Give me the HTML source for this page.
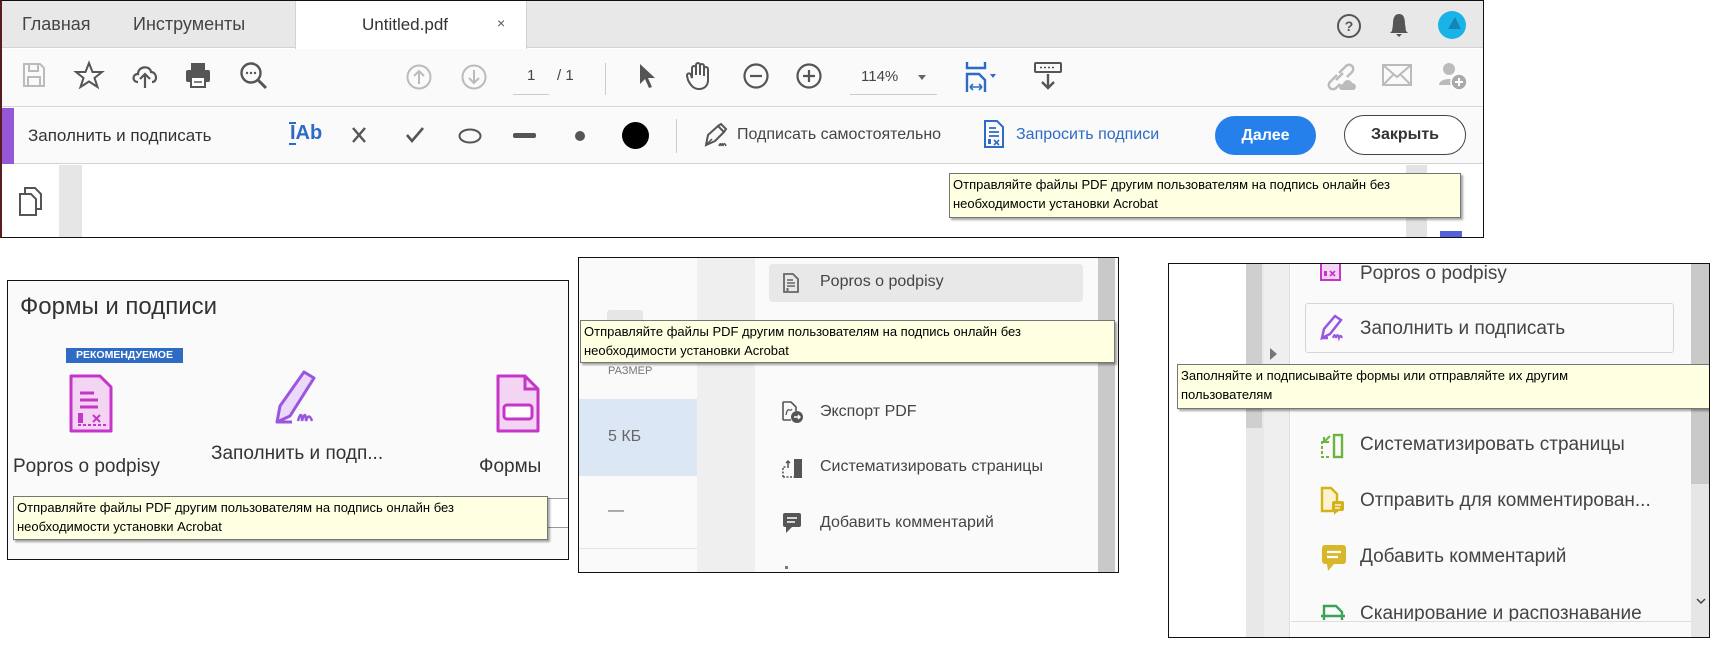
<!DOCTYPE html>
<html><head><meta charset="utf-8">
<style>
*{margin:0;padding:0;box-sizing:border-box}
body{width:1716px;height:657px;background:#fff;position:relative;overflow:hidden;font-family:"Liberation Sans","DejaVu Sans",sans-serif;color:#333}
.a{position:absolute}
.t{position:absolute;white-space:nowrap}
.tip{position:absolute;background:#ffffe1;border:1px solid #767676;box-shadow:2px 2px 2px rgba(0,0,0,.35);font-size:13px;line-height:19px;padding:1px 3px;color:#000}
svg{position:absolute;overflow:visible}
</style></head><body>

<!-- ===== TOP WINDOW ===== -->
<div class="a" style="left:0;top:0;width:1484px;height:238px;border:1px solid #111;border-left:2px solid #5a1d1d;background:#fff;overflow:hidden">
  <div class="a" style="left:0;top:0;width:1484px;height:47px;background:#e8e8e8;border-bottom:1px solid #d3d3d3"></div>
  <div class="a" style="left:293px;top:0;width:232px;height:48px;background:#fff;border-left:1px solid #d3d3d3;border-right:1px solid #d3d3d3"></div>
  <div class="t" style="left:20px;top:13px;font-size:18px;color:#444">Главная</div>
  <div class="t" style="left:131px;top:13px;font-size:18px;color:#444">Инструменты</div>
  <div class="t" style="left:360px;top:14px;font-size:17px;color:#333">Untitled.pdf</div>
  <div class="t" style="left:495px;top:14px;font-size:14px;color:#555">×</div>
  <svg style="left:1334px;top:12px" width="26" height="26"><circle cx="13" cy="13" r="11" fill="none" stroke="#555" stroke-width="2"/><text x="13" y="18" font-size="14" font-weight="bold" text-anchor="middle" fill="#555" font-family="Liberation Sans">?</text></svg>
  <svg style="left:1386px;top:11px" width="22" height="26"><path d="M11 2 C6 2 5 7 5 12 L4 19 L2 21 L20 21 L18 19 L17 12 C17 7 16 2 11 2Z M8 22 L14 22 L11 25Z" fill="#555"/></svg>
  <svg style="left:1436px;top:10px" width="28" height="28"><circle cx="14" cy="14" r="14" fill="#1ab3e8"/><path d="M10 18 L17 6 L23 18Z" fill="#1287b5"/></svg>

  <div class="a" style="left:0;top:48px;width:1484px;height:58px;background:#fafafa;border-bottom:1px solid #d7d7d7"></div>
  <svg style="left:20px;top:61px" width="24" height="26"><path d="M2 2 H18 L22 6 V24 H2Z" fill="none" stroke="#bbb" stroke-width="2"/><rect x="7" y="2" width="9" height="7" fill="none" stroke="#bbb" stroke-width="2"/><rect x="6" y="15" width="12" height="9" fill="none" stroke="#bbb" stroke-width="2"/></svg>
  <svg style="left:72px;top:60px" width="30" height="28"><path d="M15 2 L18.5 11 L28 11 L20.5 17 L23.5 26 L15 20.5 L6.5 26 L9.5 17 L2 11 L11.5 11Z" fill="none" stroke="#555" stroke-width="2"/></svg>
  <svg style="left:128px;top:60px" width="30" height="28"><path d="M8 21 C2 21 2 13 8 13 C8 5 20 4 21 11 C27 11 28 21 22 21" fill="none" stroke="#555" stroke-width="2.2"/><path d="M15 27 V13 M10 18 L15 13 L20 18" fill="none" stroke="#555" stroke-width="2.2"/></svg>
  <svg style="left:182px;top:60px" width="28" height="28"><rect x="7" y="2" width="14" height="7" fill="#555"/><rect x="2" y="9" width="24" height="12" rx="2" fill="#555"/><rect x="7" y="16" width="14" height="10" fill="#fff" stroke="#555" stroke-width="2"/><path d="M10 21 H18" stroke="#555" stroke-width="1.5"/></svg>
  <svg style="left:237px;top:60px" width="30" height="30"><circle cx="12" cy="12" r="9.5" fill="none" stroke="#555" stroke-width="2.4"/><path d="M19 19 L27 27" stroke="#555" stroke-width="3"/><circle cx="8" cy="12" r="1.2" fill="#555"/><circle cx="12" cy="12" r="1.2" fill="#555"/><circle cx="16" cy="12" r="1.2" fill="#555"/></svg>
  <svg style="left:404px;top:63px" width="26" height="26"><circle cx="13" cy="13" r="11.5" fill="none" stroke="#bbb" stroke-width="2"/><path d="M13 20 V7 M8 12 L13 7 L18 12" fill="none" stroke="#bbb" stroke-width="2"/></svg>
  <svg style="left:459px;top:63px" width="26" height="26"><circle cx="13" cy="13" r="11.5" fill="none" stroke="#bbb" stroke-width="2"/><path d="M13 6 V19 M8 14 L13 19 L18 14" fill="none" stroke="#bbb" stroke-width="2"/></svg>
  <div class="t" style="left:525px;top:66px;font-size:15px;color:#444">1</div>
  <div class="a" style="left:511px;top:93px;width:36px;height:1px;background:#ccc"></div>
  <div class="t" style="left:555px;top:66px;font-size:15px;color:#444">/ 1</div>
  <div class="a" style="left:603px;top:62px;width:1px;height:32px;background:#ccc"></div>
  <svg style="left:635px;top:61px" width="20" height="28"><path d="M3 2 L3 22 L8 17 L12 26 L15 25 L11 16 L18 16Z" fill="#555"/></svg>
  <svg style="left:683px;top:60px" width="28" height="30"><path d="M7 17 V7 a2 2 0 0 1 4 0 V14 V4 a2 2 0 0 1 4 0 V14 V5 a2 2 0 0 1 4 0 V15 V8 a2 2 0 0 1 4 0 V19 C23 25 19 28 14 28 C9 28 6 25 3 19 L2 15 a2 2 0 0 1 4 -1Z" fill="none" stroke="#555" stroke-width="2"/></svg>
  <svg style="left:741px;top:62px" width="26" height="26"><circle cx="13" cy="13" r="11.5" fill="none" stroke="#555" stroke-width="2.2"/><path d="M7 13 H19" stroke="#555" stroke-width="2.2"/></svg>
  <svg style="left:794px;top:62px" width="26" height="26"><circle cx="13" cy="13" r="11.5" fill="none" stroke="#555" stroke-width="2.2"/><path d="M7 13 H19 M13 7 V19" stroke="#555" stroke-width="2.2"/></svg>
  <div class="t" style="left:859px;top:67px;font-size:15px;color:#444">114%</div>
  <svg style="left:916px;top:74px" width="8" height="5"><path d="M0 0 H8 L4 5Z" fill="#666"/></svg>
  <div class="a" style="left:848px;top:93px;width:87px;height:1px;background:#ccc"></div>
  <svg style="left:963px;top:60px" width="32" height="32"><path d="M2 1 V7 H20 V1" fill="none" stroke="#2d6bc4" stroke-width="2.4"/><path d="M2 31 V13 H14 L20 19 V31" fill="none" stroke="#2d6bc4" stroke-width="2.4"/><path d="M5 26 H17 M5 26 L8 23 M5 26 L8 29 M17 26 L14 23 M17 26 L14 29" stroke="#2d6bc4" stroke-width="1.6" fill="none"/><path d="M25 13 H31 L28 17Z" fill="#2d6bc4"/></svg>
  <svg style="left:1032px;top:61px" width="28" height="28"><rect x="1" y="1" width="26" height="9" rx="1" fill="none" stroke="#555" stroke-width="2"/><path d="M6 5.5 H22" stroke="#555" stroke-width="1.5" stroke-dasharray="2 2"/><path d="M14 12 V26 M8 20 L14 26 L20 20" fill="none" stroke="#555" stroke-width="2.4"/></svg>
  <svg style="left:1323px;top:60px" width="32" height="30"><path d="M12 14 L5 21 a4 4 0 0 0 6 6 L15 23 M14 12 L21 5 a4 4 0 0 1 6 6 L22 16 M11 19 L18 12" fill="none" stroke="#bbb" stroke-width="2.4"/><path d="M17 29 C13 29 13 23 18 23 C19 18 26 18 27 22 C32 22 32 29 28 29Z" fill="#bbb"/></svg>
  <svg style="left:1380px;top:63px" width="30" height="22"><rect x="1" y="1" width="28" height="20" fill="none" stroke="#bbb" stroke-width="2"/><path d="M1 1 L15 13 L29 1 M1 21 L11 11 M29 21 L19 11" fill="none" stroke="#bbb" stroke-width="2"/></svg>
  <svg style="left:1436px;top:60px" width="32" height="30"><circle cx="11" cy="8" r="6" fill="#bbb"/><path d="M1 24 C1 16 21 16 21 24Z" fill="#bbb"/><circle cx="21" cy="21" r="8" fill="#aaa" stroke="#fff" stroke-width="1.5"/><path d="M17 21 H25 M21 17 V25" stroke="#fff" stroke-width="2"/></svg>

  <div class="a" style="left:0;top:107px;width:1484px;height:56px;background:#fafafa;border-bottom:1px solid #d3d3d3"></div>
  <div class="a" style="left:0;top:107px;width:12px;height:56px;background:#9656d6"></div>
  <div class="t" style="left:26px;top:125px;font-size:17px;color:#333">Заполнить и подписать</div>
  <div class="t" style="left:288px;top:121px;font-size:20px;color:#2d6bc4;font-weight:bold">IAb</div>
  <div class="a" style="left:287px;top:121px;width:7px;height:2px;background:#2d6bc4"></div>
  <div class="a" style="left:287px;top:142px;width:7px;height:2px;background:#2d6bc4"></div>
  <svg style="left:349px;top:126px" width="16" height="16"><path d="M2 1 L14 15 M14 1 L2 15" stroke="#555" stroke-width="2.4"/></svg>
  <svg style="left:403px;top:126px" width="20" height="16"><path d="M2 8 L7 14 L18 1" fill="none" stroke="#555" stroke-width="2.6"/></svg>
  <svg style="left:456px;top:127px" width="24" height="16"><ellipse cx="12" cy="8" rx="10.5" ry="6.5" fill="none" stroke="#555" stroke-width="2"/></svg>
  <div class="a" style="left:511px;top:132px;width:23px;height:5px;border-radius:2px;background:#555"></div>
  <div class="a" style="left:573px;top:130px;width:10px;height:10px;border-radius:50%;background:#555"></div>
  <div class="a" style="left:620px;top:121px;width:27px;height:27px;border-radius:50%;background:#000"></div>
  <div class="a" style="left:674px;top:118px;width:1px;height:34px;background:#ccc"></div>
  <svg style="left:700px;top:122px" width="28" height="26"><path d="M4 22 L6 12 L16 3 L22 9 L13 18Z" fill="none" stroke="#555" stroke-width="2"/><path d="M16 3 L19 1 L24 6 L22 9" fill="none" stroke="#555" stroke-width="2"/><path d="M4 22 L10 16" stroke="#555" stroke-width="1.5"/><path d="M17 23 c1 -3 2 -3 2 0 c1 -3 2 -3 2 0 c1 -3 2 -3 3 0" fill="none" stroke="#555" stroke-width="1.5"/></svg>
  <div class="t" style="left:735px;top:125px;font-size:16px;color:#444">Подписать самостоятельно</div>
  <svg style="left:982px;top:119px" width="20" height="28"><path d="M1 1 H13 L19 7 V27 H1Z" fill="none" stroke="#2d6bc4" stroke-width="2"/><path d="M5 8 H12 M5 12 H15 M5 16 H15" stroke="#2d6bc4" stroke-width="1.8"/><rect x="4" y="19" width="3" height="5" fill="#2d6bc4"/><path d="M10 20 L15 25 M15 20 L10 25" stroke="#2d6bc4" stroke-width="1.6"/></svg>
  <div class="t" style="left:1014px;top:125px;font-size:16px;color:#2d6bc4">Запросить подписи</div>
  <div class="a" style="left:1213px;top:115px;width:101px;height:39px;border-radius:20px;background:#2680eb;color:#fff;font-weight:bold;font-size:16px;text-align:center;line-height:39px">Далее</div>
  <div class="a" style="left:1342px;top:114px;width:122px;height:40px;border-radius:20px;border:1.5px solid #444;background:#fff;color:#333;font-weight:bold;font-size:16px;text-align:center;line-height:37px">Закрыть</div>

  <div class="a" style="left:57px;top:164px;width:23px;height:74px;background:#e6e6e6"></div>
  <svg style="left:16px;top:186px" width="26" height="30"><path d="M7 6 V1 H17 L23 7 V22 H19" fill="none" stroke="#555" stroke-width="2"/><path d="M2 7 H13 L18 12 V28 H2Z" fill="none" stroke="#555" stroke-width="2"/></svg>
  <div class="a" style="left:1404px;top:164px;width:21px;height:74px;background:#e3e3e3"></div>
  <div class="a" style="left:1438px;top:230px;width:22px;height:8px;background:#5660d8"></div>
  <div class="tip" style="left:947px;top:172px;width:512px;height:45px">Отправляйте файлы PDF другим пользователям на подпись онлайн без<br>необходимости установки Acrobat</div>
</div>

<!-- ===== PANEL 1 ===== -->
<div class="a" style="left:7px;top:280px;width:562px;height:280px;border:1px solid #111;background:#fafafa;overflow:hidden">
  <div class="t" style="left:12px;top:12px;font-size:24px;color:#333">Формы и подписи</div>
  <div class="a" style="left:58px;top:67px;width:117px;height:15px;background:#2d6bc4;color:#fff;font-size:10.5px;font-weight:bold;line-height:15px;text-align:center">РЕКОМЕНДУЕМОЕ</div>
  <svg style="left:60px;top:92px" width="46" height="62"><path d="M3 3 H32 L43 14 V58 H3Z" fill="#f3d4f3" stroke="#c535c8" stroke-width="3" stroke-linejoin="round"/><path d="M12 20 H26 M12 27 H30 M12 34 H30" stroke="#c535c8" stroke-width="3"/><rect x="10" y="40" width="5" height="10" fill="#c535c8"/><path d="M10 52 H38" stroke="#c535c8" stroke-width="2" stroke-dasharray="3 2"/><path d="M25 42 L32 49 M32 42 L25 49" stroke="#c535c8" stroke-width="2"/></svg>
  <svg style="left:266px;top:87px" width="50" height="58"><path d="M3 54 L6 38 L30 4 L40 10 L16 48Z" fill="#ead9f8" stroke="#9a56e0" stroke-width="3" stroke-linejoin="round"/><path d="M3 54 H18" stroke="#9a56e0" stroke-width="3"/><path d="M24 53 c2 -8 4 -8 4 0 c2 -8 4 -8 4 0 c2 -6 4 -6 6 0" fill="none" stroke="#9a56e0" stroke-width="2.5"/></svg>
  <svg style="left:487px;top:92px" width="46" height="62"><path d="M3 3 H30 L43 16 V58 H3Z" fill="#f3d4f3" stroke="#c535c8" stroke-width="3" stroke-linejoin="round"/><path d="M30 3 V16 H43" fill="none" stroke="#c535c8" stroke-width="3"/><rect x="9" y="32" width="28" height="14" rx="3" fill="#fff" stroke="#c535c8" stroke-width="3"/></svg>
  <div class="t" style="left:5px;top:175px;font-size:19px;color:#333">Popros o podpisy</div>
  <div class="t" style="left:203px;top:162px;font-size:19px;color:#333">Заполнить и подп...</div>
  <div class="t" style="left:471px;top:175px;font-size:19px;color:#333">Формы</div>
  <div class="a" style="left:530px;top:217px;width:32px;height:30px;border:1px solid #999;border-left:none;background:#fff"></div>
  <div class="tip" style="left:5px;top:215px;width:535px;height:44px">Отправляйте файлы PDF другим пользователям на подпись онлайн без<br>необходимости установки Acrobat</div>
</div>

<!-- ===== PANEL 2 ===== -->
<div class="a" style="left:578px;top:257px;width:541px;height:316px;border:1px solid #111;background:#fafafa;overflow:hidden">
  <div class="a" style="left:0;top:0;width:118px;height:316px;background:#fafafa"></div>
  <div class="a" style="left:28px;top:52px;width:36px;height:20px;background:#e6e6e6;border-radius:3px"></div>
  <div class="t" style="left:29px;top:107px;font-size:11px;color:#777">РАЗМЕР</div>
  <div class="a" style="left:0;top:141px;width:118px;height:77px;background:#dce7f5"></div>
  <div class="t" style="left:29px;top:170px;font-size:16px;color:#666">5 КБ</div>
  <div class="a" style="left:0;top:290px;width:118px;height:1px;background:#e3e3e3"></div>
  <div class="t" style="left:29px;top:244px;font-size:16px;color:#666">—</div>
  <div class="a" style="left:118px;top:0;width:58px;height:316px;background:#efefef"></div>
  <div class="a" style="left:519px;top:0;width:17px;height:316px;background:#c9c9c9"></div>
  <div class="a" style="left:190px;top:6px;width:314px;height:38px;background:#e8e8e8;border-radius:4px"></div>
  <svg style="left:204px;top:15px" width="16" height="20"><path d="M1 1 H10 L15 6 V19 H1Z" fill="none" stroke="#666" stroke-width="1.8"/><path d="M4 7 H10 M4 10 H12 M4 13 H12" stroke="#666" stroke-width="1.4"/><rect x="3.5" y="15" width="2" height="3" fill="#666"/></svg>
  <div class="t" style="left:241px;top:15px;font-size:16px;color:#444">Popros o podpisy</div>
  <svg style="left:203px;top:143px" width="22" height="24"><path d="M1 1 H9 L14 6 V10 M9 19 H1Z M1 1 V19" fill="none" stroke="#555" stroke-width="1.6"/><path d="M4 14 c2 -10 4 -2 6 -6" fill="none" stroke="#555" stroke-width="1.3"/><circle cx="15" cy="16" r="6" fill="#555"/><path d="M12 16 H18 M16 14 L18 16 L16 18" stroke="#fff" stroke-width="1.4" fill="none"/></svg>
  <div class="t" style="left:241px;top:145px;font-size:16px;color:#444">Экспорт PDF</div>
  <svg style="left:203px;top:199px" width="22" height="22"><path d="M1 20 V10 H8 M1 20 H12" fill="none" stroke="#555" stroke-width="1.5" stroke-dasharray="2 1.5"/><rect x="12" y="2" width="8" height="19" fill="#555"/><path d="M6 4 V9 M4 6 L6 4 L8 6" stroke="#555" stroke-width="1.5" fill="none"/></svg>
  <div class="t" style="left:241px;top:200px;font-size:16px;color:#444">Систематизировать страницы</div>
  <svg style="left:203px;top:254px" width="20" height="22"><rect x="1" y="1" width="18" height="14" rx="2" fill="#555"/><path d="M4 15 L4 21 L10 15Z" fill="#555"/><path d="M5 6 H15 M5 10 H13" stroke="#fff" stroke-width="1.6"/></svg>
  <div class="t" style="left:241px;top:256px;font-size:16px;color:#444">Добавить комментарий</div>
  <div class="a" style="left:206px;top:308px;width:3px;height:3px;background:#777"></div>
  <div class="tip" style="left:1px;top:62px;width:535px;height:43px">Отправляйте файлы PDF другим пользователям на подпись онлайн без<br>необходимости установки Acrobat</div>
</div>

<!-- ===== PANEL 3 ===== -->
<div class="a" style="left:1168px;top:263px;width:542px;height:375px;border:1px solid #111;background:#fff;overflow:hidden">
  <div class="a" style="left:77px;top:0;width:18px;height:375px;background:#e8e8e8"></div>
  <div class="a" style="left:77px;top:0;width:16px;height:164px;background:#cfcfcf"></div>
  <div class="a" style="left:95px;top:0;width:26px;height:375px;background:#efefef;border-right:1px solid #ddd"></div>
  <svg style="left:101px;top:84px" width="8" height="12"><path d="M0 0 L7 6 L0 12Z" fill="#777"/></svg>
  <div class="a" style="left:122px;top:0;width:400px;height:375px;background:#fafafa"></div>
  <div class="a" style="left:522px;top:0;width:18px;height:375px;background:#e6e6e6"></div>
  <div class="a" style="left:522px;top:0;width:18px;height:220px;background:#c9c9c9"></div>
  <svg style="left:527px;top:334px" width="10" height="7"><path d="M1 1 L5 5 L9 1" fill="none" stroke="#444" stroke-width="1.5"/></svg>
  <svg style="left:151px;top:-5px" width="22" height="22"><rect x="1" y="1" width="19" height="20" fill="#f3d4f3" stroke="#c535c8" stroke-width="2"/><rect x="4" y="12" width="3" height="5" fill="#c535c8"/><path d="M10 12 L15 17 M15 12 L10 17" stroke="#c535c8" stroke-width="1.6"/></svg>
  <div class="t" style="left:191px;top:-1px;font-size:19px;color:#444">Popros o podpisy</div>
  <div class="a" style="left:136px;top:39px;width:369px;height:50px;border:1px solid #d6d6d6;border-radius:3px;background:#fafafa"></div>
  <svg style="left:151px;top:50px" width="26" height="26"><path d="M2 24 L4 15 L15 2 L21 6 L10 20Z" fill="none" stroke="#9a56e0" stroke-width="2.5"/><path d="M2 24 H8" stroke="#9a56e0" stroke-width="2.5"/><path d="M13 24 c1 -4 2 -4 3 0 c1 -4 2 -4 3 0 c1 -3 2 -3 3 0" fill="none" stroke="#9a56e0" stroke-width="2"/></svg>
  <div class="t" style="left:191px;top:54px;font-size:19px;color:#444">Заполнить и подписать</div>
  <svg style="left:151px;top:169px" width="24" height="26"><path d="M2 8 V24 H11" fill="none" stroke="#6db33f" stroke-width="2" stroke-dasharray="3 2"/><rect x="14" y="2" width="8" height="22" fill="none" stroke="#6db33f" stroke-width="2.4"/><path d="M10 3 L4 9 M4 4 V9 H9" fill="none" stroke="#6db33f" stroke-width="2"/></svg>
  <div class="t" style="left:191px;top:170px;font-size:19px;color:#444">Систематизировать страницы</div>
  <svg style="left:151px;top:223px" width="26" height="30"><path d="M2 1 H11 L17 7 V24 H2Z" fill="#fbf3cf" stroke="#d4b21a" stroke-width="2.4"/><rect x="12" y="14" width="12" height="10" rx="2" fill="#d4b21a"/><path d="M14 24 V28 L18 24" fill="#d4b21a"/><path d="M15 18 H21 M15 21 H20" stroke="#fff" stroke-width="1.3"/></svg>
  <div class="t" style="left:191px;top:226px;font-size:19px;color:#444">Отправить для комментирован...</div>
  <svg style="left:152px;top:280px" width="26" height="28"><rect x="1" y="1" width="24" height="19" rx="3" fill="#d9b72a"/><path d="M6 20 L7 27 L13 20Z" fill="#d9b72a"/><path d="M6 8 H20 M6 13 H17" stroke="#fff" stroke-width="2.2"/></svg>
  <div class="t" style="left:191px;top:282px;font-size:19px;color:#444">Добавить комментарий</div>
  <svg style="left:151px;top:336px" width="26" height="22"><path d="M4 20 V6 H16 L22 12 V20" fill="none" stroke="#3aa357" stroke-width="2.4"/><path d="M1 16 H25" stroke="#3aa357" stroke-width="2.4"/></svg>
  <div class="t" style="left:191px;top:339px;font-size:19px;color:#444">Сканирование и распознавание</div>
  <div class="a" style="left:122px;top:357px;width:400px;height:18px;background:#fafafa;border-top:1px solid #ddd"></div>
  <div class="tip" style="left:8px;top:100px;width:535px;height:45px">Заполняйте и подписывайте формы или отправляйте их другим<br>пользователям</div>
</div>

</body></html>
